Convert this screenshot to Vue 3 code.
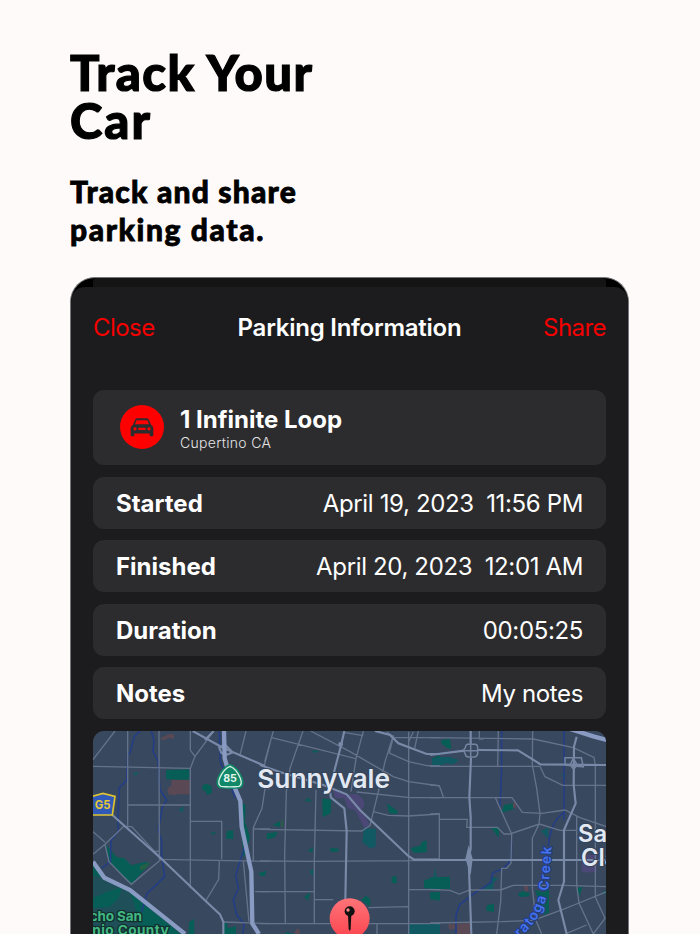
<template>
  <main class="page">
    <header class="intro">
      <h1>Track Your<br><span class="second">Car</span></h1>
      <p>Track and share<br><span class="second">parking data.</span></p>
    </header>
    <section class="device">
      <div class="backdrop"></div>
      <div class="sheet">
        <nav class="toolbar">
          <span class="action">Close</span>
          <span class="title">Parking Information</span>
          <span class="action share">Share</span>
        </nav>
        <div class="card place">
          <div class="badge">
            <svg viewBox="0 0 72 56" width="24" height="19">
              <path fill-rule="evenodd" d="M16 3Q18 0 23 0H49Q54 0 56 3L63 20Q70 23 70 31V51Q70 54 67 54H62Q59 54 59 51V46H13V51Q13 54 10 54H5Q2 54 2 51V31Q2 23 9 20ZM21 6Q20 6 19 8L15 18H57L53 8Q52 6 51 6ZM15 27A5 5 0 1 0 15 37A5 5 0 1 0 15 27ZM57 27A5 5 0 1 0 57 37A5 5 0 1 0 57 27ZM28 28.500A3.500 3.500 0 0 0 28 35.500H44A3.500 3.500 0 0 0 44 28.500Z" />
            </svg>
          </div>
          <div>
            <div class="street">1 Infinite Loop</div>
            <div class="city">Cupertino CA</div>
          </div>
        </div>
        <div class="card row" v-for="row in rows" :key="row.label">
          <b>{{ row.label }}</b>
          <span class="value">
            <span v-for="part in row.parts" :key="part">{{ part }}</span>
          </span>
        </div>
        <div class="map">
          <svg viewBox="0 0 1539 609" width="513" height="203">
            <rect width="1539" height="609" class="land" />

            <!-- west -->
            <g transform="translate(-9 -18)">
              <path class="patch" d="M9 425L45 459L120 500L190 550L250 600L280 627H9Z" />
              <path class="park" d="M228 135L298 133V165L228 163ZM337 180L350 176L365 183V205L352 210L344 197L337 195ZM410 318L430 316V342L408 341ZM360 323L380 322L370 329ZM502 446L527 438L526 453ZM45 358L60 372L80 396L103 400L124 421L165 410L180 416L124 478L98 452L57 410ZM452 232L467 240L465 290L480 335L470 375L460 400L455 310ZM9 420L28 428L46 458L9 452ZM50 500L95 487L86 520L60 545L9 550V520ZM120 505L155 530L190 560L240 600L270 627H150L140 560ZM298 590L313 582V627H295ZM400 590L412 592L412 610L438 604V627H400ZM530 325H540V342H530Z" />
              <path class="teal" d="M265 255L280 243V262ZM128 145L145 142L138 153Z" />
              <path class="clay" d="M244 165L300 164V208H246ZM232 195L240 183L258 188V210L236 209ZM208 42L235 28L252 27V42L235 38L225 46Z" />
              <path class="moss" d="M150 423L180 411L170 428L150 438Z" />
              <path class="creek" d="M150 18L133 34L120 84L113 90L110 166L88 188L84 270L85 318L63 347L61 410L35 430M184 18L192 46L189 80L204 107L210 195L230 225L217 248L205 315L215 350V390L224 455L170 507L155 560M388 18L391 110L425 190L435 220M470 345L453 400L437 450L445 490L430 525L440 570L462 595L459 627" />
              <path class="minor" d="M113 18V305M207 18L208 402M9 124L301 130M113 240H301M301 18V76L315 94L301 130V490M315 94L371 18M9 104L75 18M301 289H395V403M207 403L540 409M190 379H207M9 320L45 352M9 388L45 358L100 305L125 305L215 402L124 478L98 452L57 410L45 358M388 409L386 463L347 528M400 591L540 596M460 409L477 590M540 191H525L516 250L490 308V409M490 312H540M495 500H540M450 90L468 18M523 122L540 55" />
              <path class="major" d="M67 270L215 402L347 528L390 568L400 591V627M308 18L400 69L525 123M345 45L371 18M388 68L404 58L412 66L428 82L408 90L394 84Z" />
              <path class="highway" d="M402 18L404 100L420 155L451 228L455 305L484 440L487 596L507 627M9 410L43 458L120 495L220 575L285 627" />
            </g>

            <!-- centre -->
            <g transform="translate(501 -18)">
              <path class="park" d="M187 220L214 224L212 265L188 277ZM132 226L146 219L156 232ZM38 300L60 288V307ZM22 325L53 321L45 337L22 343ZM143 378L158 366V382ZM210 369L237 371L233 380H212ZM0 445L19 437L13 452L0 454ZM133 515L151 502L144 527ZM303 525L318 512L331 522L330 545ZM380 235L412 257V268L388 265ZM451 370L482 361L485 350L500 346V382L462 384ZM395 455L410 453V475L395 474ZM492 465L540 455V493L492 490ZM506 505L540 500V527ZM154 77L180 77L164 84ZM516 100L540 91V120L517 118ZM72 627L80 621L105 627Z" />
              <path class="teal" d="M446 597L540 597V627H446ZM520 455L526 427L530 455ZM148 440L160 430V455ZM311 308L348 312L347 365L330 370L307 352Z" />
              <path class="purple" d="M218 193L260 208L290 207Q315 220 313 240L305 255L331 302L315 312L285 255L263 250L253 220L226 220Z" />
              <path class="clay" d="M105 620L112 610L119 615V627H105Z" />
              <path class="moss" d="M63 292L69 281V305H63Z" />
              <path class="minor" d="M40 18L14 110M35 38L288 101L273 200M129 18L90 130L79 200L74 390L76 595M0 313L305 318L330 302L355 200L375 110L400 30M152 18L270 80L400 155L446 170L540 183M310 18L288 101M290 201L450 218H540M340 260L385 271L445 273L540 267M0 408L164 409L540 406M168 195L163 409V595M0 500H163M163 524H220M325 548L444 545M0 596H540M444 494H540M351 596V627M446 20V627M380 20L400 35L388 84L446 110L500 122H540M446 50L460 20M475 18L464 70M250 22L310 32M400 38H540" />
              <path class="major" d="M253 18L244 58L225 130L209 195L213 218L253 250L260 318L256 525M0 120L60 141L190 180L260 208L300 255L445 393L462 404H540M345 18L390 30L415 55L500 87H540" />
              <circle class="major" cx="242" cy="58" r="4" />
            </g>

            <!-- east -->
            <g transform="translate(1011 -18)">
              <path class="park" d="M33 45L60 42L64 72L54 70L36 58ZM222 240L250 235V253L214 263ZM184 309L207 307V340ZM0 457L60 455V492H0ZM0 502L30 500V527L0 522ZM263 506L278 498L298 504V514L270 516ZM172 539L192 537V562L167 556ZM442 488L458 486L447 517ZM516 502L530 496V510ZM315 495L340 502L357 490V562L345 570L318 558L328 535Z" />
              <path class="teal" d="M333 318L355 307V342ZM182 455L204 459L190 474V495L158 494L182 475ZM0 598H20V627H0ZM396 150L405 140V165ZM6 103L30 96H60L87 105L70 118L48 115L35 121L6 119Z" />
              <path class="clay" d="M78 597L120 594V627H80ZM55 597L75 598V613H57ZM282 483L294 481V498L284 500ZM249 235L258 233V247L249 248Z" />
              <path class="purple" d="M455 390H500V442H455Z" />
              <path class="creek" d="M215 18L214 150L210 245M402 18V285M402 262Q360 290 355 365M244 345V405L220 430L188 444L183 472L120 514L88 540L78 570V627" />
              <path class="minor" d="M0 38L310 42L430 68L492 97L496 120V516M0 124H330L345 155L398 181H530M308 18L307 120L320 190L330 265L327 297L307 340V490M205 18L203 124M148 18V42H160M0 218L246 218L277 262L335 265L405 255L450 278L530 305M196 218L245 327L243 415L230 430H215L212 530L200 627M0 267L28 266V403M28 283H112L110 307H202L222 327H240L328 297L390 316H440M440 275V480L447 534L490 627M0 493L60 496L88 507L120 495H212L250 481H400L530 485M0 594L215 590L310 586L397 554L447 534L530 500M307 490L318 586L335 627M410 625L470 600M490 627L525 580L496 516M0 180L28 182L41 218" />
              <path class="major" d="M122 18V57M123 98L118 218L122 275V370L116 405L124 627M0 90L103 77M143 75L264 76L332 118L530 120M0 405H530M440 35L432 65L431 180L437 235L402 315V470L385 525L410 627" />
              <path class="ramp" d="M112 58H136Q143 60 143 67V86Q142 94 134 96H114Q106 94 106 87L100 76L106 68Q106 60 112 58ZM122 58V97M103 77H143M405 98H454L460 126L405 120ZM430 100L420 120L431 133L442 120Z" />
              <path class="junction" d="M116 360L128 401L122 450L106 401Z" />
              <path class="highway" d="M420 12L490 34L530 45" />
            </g>

            <path id="creek-label" d="M1205 684Q1310 602 1338 552Q1362 507 1368 462L1376 344" fill="none" />
            <text class="water"><textPath href="#creek-label" startOffset="100%">aratoga Creek</textPath></text>

            <path class="shield-edge" d="M411 102Q390 109 376 140Q368 163 381 169Q411 173 441 169Q454 163 446 140Q432 109 411 102Z" />
            <path class="shield" d="M411 106Q392 113 380 142Q373 161 384 166Q411 169 438 166Q449 161 442 142Q430 113 411 106Z" />
            <text class="route" x="411" y="154">85</text>
            <path class="county" d="M-9 198L30 187L66 196L58 252H-2Z" />
            <text class="county-no" x="29" y="234">G5</text>

            <text class="town" x="493" y="170" textLength="398">Sunnyvale</text>
            <text class="city-name" x="1455" y="332">Santa</text>
            <text class="city-name" x="1464" y="405">Clara</text>
            <text class="park-name" x="-10" y="571" textLength="157">cho San</text>
            <text class="park-name" x="-2" y="613" textLength="229">nio County</text>

            <defs>
              <linearGradient id="pin" x1="0" y1="0" x2="0" y2="1">
                <stop offset="0" stop-color="#ff7478" />
                <stop offset="1" stop-color="#fb4550" />
              </linearGradient>
            </defs>
            <circle cx="770" cy="562" r="60" fill="url(#pin)" />
            <path class="needle" d="M765 552H775L773 594Q770 604 767 594Z" />
            <circle cx="770" cy="541" r="15" fill="#111" />
            <circle cx="765" cy="537" r="5" fill="#f88" />
          </svg>
        </div>
      </div>
    </section>
  </main>
</template>

<script setup>
const rows = [
  { label: 'Started', parts: ['April 19, 2023', '11:56 PM'] },
  { label: 'Finished', parts: ['April 20, 2023', '12:01 AM'] },
  { label: 'Duration', parts: ['00:05:25'] },
  { label: 'Notes', parts: ['My notes'] }
]
</script>

<style>
body {
  background: #fffafa;
}
</style>

<style scoped>
* {
  box-sizing: border-box;
}

.page {
  height: 934px;
  padding: 48px 71px 0 70px;
  overflow: hidden;
  background: #fffafa;
  font-family: Inter, sans-serif;
}

.intro {
  height: 229px;
  color: #000;
  font-family: Lato, sans-serif;
}

h1 {
  margin: 0;
  font-size: 49px;
  font-weight: 900;
  line-height: 48px;
  letter-spacing: 1.400px;
  -webkit-text-stroke: 1.200px #000;
}

h1 .second {
  letter-spacing: 2px;
}

.intro p {
  margin: 28px 0 0;
  font-size: 30px;
  font-weight: 900;
  line-height: 38px;
  letter-spacing: 1.200px;
  -webkit-text-stroke: 0.800px #000;
}

.intro p .second {
  letter-spacing: 1.600px;
}

.device {
  height: 700px;
  border: 1px solid #77777b;
  border-bottom: 0;
  border-radius: 25px 25px 0 0;
  background: #000;
  overflow: hidden;
}

.backdrop {
  height: 9px;
  margin: 0 22px;
  border-radius: 4px 4px 0 0;
  background: #141414;
}

.sheet {
  height: 700px;
  padding: 0 22px;
  border-radius: 14px 14px 0 0;
  background: #1c1c1e;
  color: #fff;
  display: flex;
  flex-direction: column;
  gap: 11.500px;
}

.toolbar {
  display: grid;
  grid-template-columns: 1fr auto 1fr;
  align-items: center;
  height: 91.500px;
  padding-bottom: 11px;
  font-size: 24px;
}

.action {
  color: #f50000;
  letter-spacing: -0.550px;
}

.share {
  text-align: right;
}

.title {
  font-weight: 600;
  letter-spacing: -0.250px;
}

.card {
  flex: none;
  border-radius: 11px;
  background: #2c2c2e;
  display: flex;
  align-items: center;
}

.place {
  height: 75px;
  padding: 2px 0 0 27px;
  gap: 16px;
}

.badge {
  width: 44px;
  height: 44px;
  margin-top: -3px;
  border-radius: 50%;
  background: #f00;
  display: flex;
  align-items: center;
  justify-content: center;
}

.badge svg {
  fill: #2c2c2e;
}

.street {
  font-size: 24px;
  font-weight: 700;
  line-height: 28px;
}

.city {
  color: #e4e4e6;
  font-size: 14px;
  font-weight: 300;
  line-height: 17px;
  letter-spacing: 0.300px;
}

.row {
  height: 52px;
  padding: 1px 23px 0;
  justify-content: space-between;
  font-size: 24px;
}

.value {
  display: flex;
  gap: 12.500px;
  letter-spacing: -0.360px;
}

.map {
  flex: none;
  height: 203px;
  border-radius: 11px 11px 0 0;
  overflow: hidden;
}

.map svg {
  display: block;
}

.land {
  fill: #38485e;
}

.park {
  fill: #075e57;
}

.patch {
  fill: #1f5059;
}

.teal {
  fill: #125a63;
}

.clay {
  fill: #5a4954;
}

.moss {
  fill: #255f45;
}

.purple {
  fill: #4b4776;
}

.creek {
  fill: none;
  stroke: #243e86;
  stroke-width: 5;
}

.minor {
  fill: none;
  stroke: #64738b;
  stroke-width: 4;
}

.major {
  fill: none;
  stroke: #7989a8;
  stroke-width: 6.500;
}

.ramp {
  fill: none;
  stroke: #7484a1;
  stroke-width: 4.500;
}

.highway {
  fill: none;
  stroke: #8a9bc3;
  stroke-width: 13;
}

.junction {
  fill: #7989a8;
}

.town,
.city-name {
  fill: #e2e9f3;
  stroke: #33435a;
  stroke-width: 6;
  paint-order: stroke;
  font-size: 79px;
  font-weight: 600;
}

.city-name {
  font-size: 71px;
}

.park-name {
  fill: #42b883;
  stroke: #12302f;
  stroke-width: 8;
  paint-order: stroke;
  font-size: 41px;
  font-weight: 700;
}

.water {
  fill: #4672ef;
  stroke: #213d82;
  stroke-width: 6;
  paint-order: stroke;
  font-size: 41px;
  font-weight: 600;
  letter-spacing: 4px;
  text-anchor: end;
}

.shield-edge {
  fill: #118867;
  stroke: #118867;
  stroke-width: 6;
}

.shield {
  fill: #118867;
  stroke: #d5eee6;
  stroke-width: 4;
}

.route {
  fill: #e2f4ee;
  font-size: 32px;
  font-weight: 700;
  text-anchor: middle;
}

.county {
  fill: #3159b8;
  stroke: #dfc331;
  stroke-width: 5;
}

.county-no {
  fill: #e3c734;
  font-size: 34px;
  font-weight: 700;
  text-anchor: middle;
}

.needle {
  fill: #111;
}
</style>
